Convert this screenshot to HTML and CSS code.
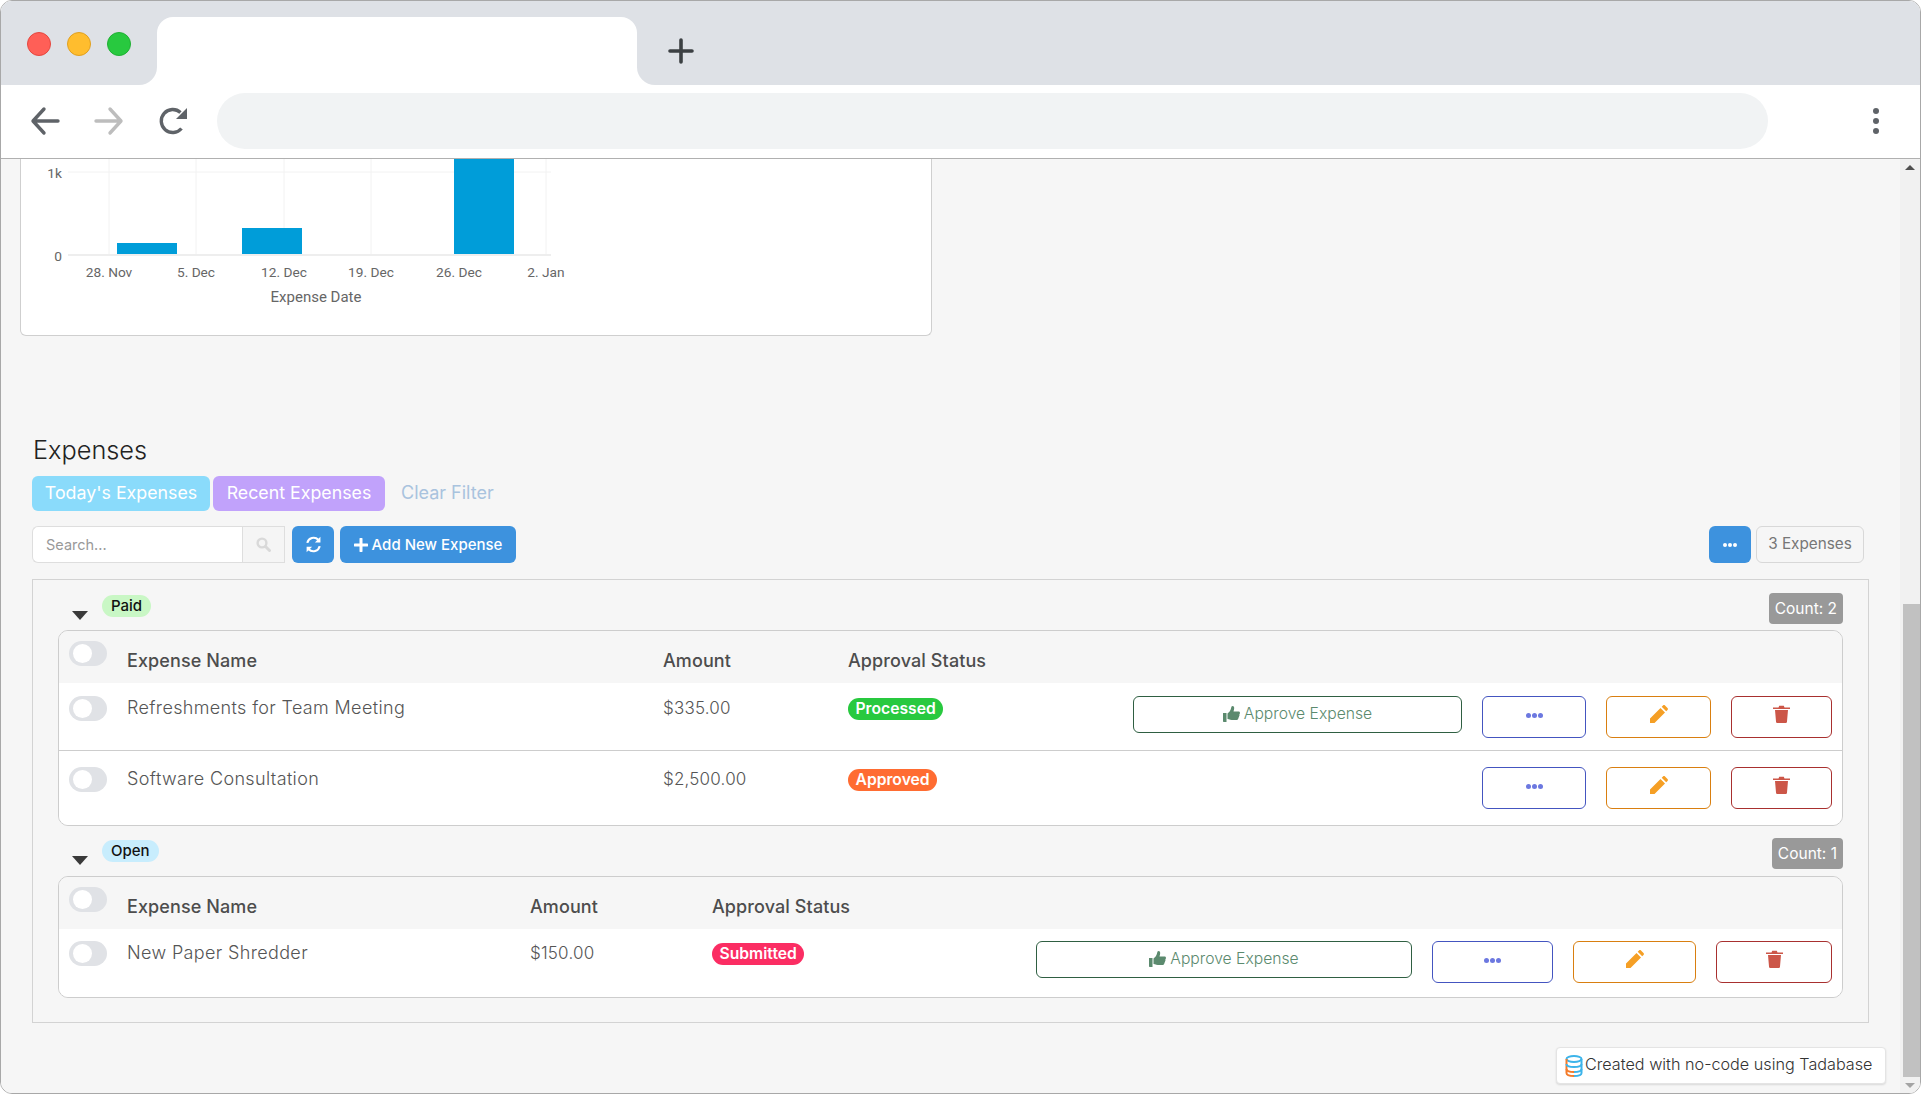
FILE: index.html
```html
<!DOCTYPE html>
<html lang="en">
<head>
    <meta charset="UTF-8">
    <meta name="viewport" content="width=device-width, initial-scale=1.0">
    <title>Expenses</title>
    <link rel="stylesheet" href="styles.css">
</head>
<body>
<div class="window">
    <div class="tabbar">
        <div class="tabbar-left">
            <span class="light light-red"></span>
            <span class="light light-yellow"></span>
            <span class="light light-green"></span>
        </div>
        <div class="tab-wrap"><div class="tab"></div></div>
        <div class="tabbar-right">
            <svg class="new-tab" width="26" height="26" viewBox="0 0 26 26"><path d="M13 2V24M2 13H24" stroke="#3c4043" stroke-width="3.6" stroke-linecap="round"/></svg>
        </div>
    </div>
    <div class="toolbar">
        <svg class="nav-icon" width="30" height="30" viewBox="0 0 30 30"><path d="M28 15H4M14 3L3 15L14 27" fill="none" stroke="#5f6368" stroke-width="3.4" stroke-linecap="round" stroke-linejoin="round"/></svg>
        <svg class="nav-icon" width="30" height="30" viewBox="0 0 30 30"><path d="M2 15H26M16 3L27 15L16 27" fill="none" stroke="#bdbdbd" stroke-width="3.4" stroke-linecap="round" stroke-linejoin="round"/></svg>
        <svg class="nav-icon" width="30" height="30" viewBox="0 0 30 30"><path d="M23.5 22.5A11.5 11.5 0 1 1 22.5 6.5" fill="none" stroke="#5f6368" stroke-width="3.4"/><path d="M29 2V13H18Z" fill="#5f6368"/></svg>
        <div class="urlbar"></div>
        <div class="kebab"><i></i><i></i><i></i></div>
    </div>

    <div class="viewport">
        <div class="page">
            <div class="chart-card">
                <svg class="chart" width="910" height="175" viewBox="0 0 910 175">
                    <g stroke="#f2f2f2" stroke-width="1">
                        <path d="M88 0V96M175 0V96M263 0V96M350 0V96M438 0V96M525 0V96"/>
                        <path d="M47 13H530"/>
                    </g>
                    <path d="M47 96H530" stroke="#eeeeee" stroke-width="2"/>
                    <g fill="#009dd9">
                        <rect x="96" y="84" width="60" height="11"/>
                        <rect x="221" y="69" width="60" height="26"/>
                        <rect x="433" y="0" width="60" height="95"/>
                    </g>
                    <g class="chart-text">
                        <text x="41" y="19" text-anchor="end">1k</text>
                        <text x="41" y="102" text-anchor="end">0</text>
                        <text x="88" y="118" text-anchor="middle">28. Nov</text>
                        <text x="175" y="118" text-anchor="middle">5. Dec</text>
                        <text x="263" y="118" text-anchor="middle">12. Dec</text>
                        <text x="350" y="118" text-anchor="middle">19. Dec</text>
                        <text x="438" y="118" text-anchor="middle">26. Dec</text>
                        <text x="525" y="118" text-anchor="middle">2. Jan</text>
                        <text x="295" y="143" text-anchor="middle" class="chart-title">Expense Date</text>
                    </g>
                </svg>
            </div>

            <h2 class="title">Expenses</h2>

            <div class="filters">
                <button class="filter filter-today">Today's Expenses</button>
                <button class="filter filter-recent">Recent Expenses</button>
                <button class="filter filter-clear">Clear Filter</button>
            </div>

            <div class="controls">
                <div class="search">
                    <div class="search-input">Search...</div>
                    <div class="search-addon">
                        <svg width="15" height="15" viewBox="0 0 15 15"><circle cx="6" cy="6" r="4.4" fill="none" stroke="#d9d9d9" stroke-width="2.4"/><path d="M9.5 9.5L13.5 13.5" stroke="#d9d9d9" stroke-width="3" stroke-linecap="round"/></svg>
                    </div>
                </div>
                <button class="btn-blue btn-refresh">
                    <svg width="17" height="17" viewBox="0 0 16 16"><path d="M2.2 6.5A6 6 0 0 1 12.5 3.6" fill="none" stroke="#fff" stroke-width="2"/><path d="M14.5 0.8V6H9.3Z" fill="#fff"/><path d="M13.8 9.5A6 6 0 0 1 3.5 12.4" fill="none" stroke="#fff" stroke-width="2"/><path d="M1.5 15.2V10H6.7Z" fill="#fff"/></svg>
                </button>
                <button class="btn-blue btn-add">
                    <svg width="14" height="14" viewBox="0 0 14 14"><path d="M7 1V13M1 7H13" stroke="#fff" stroke-width="3" stroke-linecap="round"/></svg>
                    Add New Expense
                </button>
                <div class="controls-right">
                    <button class="btn-blue btn-more">
                        <svg width="14" height="4" viewBox="0 0 14 4"><circle cx="2" cy="2" r="2" fill="#fff"/><circle cx="7" cy="2" r="2" fill="#fff"/><circle cx="12" cy="2" r="2" fill="#fff"/></svg>
                    </button>
                    <div class="total">3 Expenses</div>
                </div>
            </div>

            <div class="panel">
                <div class="group">
                    <div class="group-head">
                        <span class="caret"></span>
                        <span class="pill pill-paid">Paid</span>
                        <span class="count">Count: 2</span>
                    </div>
                    <div class="card card-paid">
                        <div class="row row-head">
                            <span class="toggle"></span>
                            <span>Expense Name</span>
                            <span>Amount</span>
                            <span>Approval Status</span>
                        </div>
                        <div class="row row-first">
                            <span class="toggle"></span>
                            <span class="cell">Refreshments for Team Meeting</span>
                            <span class="cell cell-amount">$335.00</span>
                            <span><span class="status status-processed">Processed</span></span>
                            <button class="act act-approve">
                                <svg width="17" height="16" viewBox="0 0 17 16"><path d="M0 7H3.5V16H1C.4 16 0 15.6 0 15ZM4.5 7.5C6 6.5 7.5 4.5 8 2.5C8.300 .8 8.700 0 9.500 0C11 0 11.500 1.500 11 3.500L10.500 5.500H15.500C16.500 5.500 17 6.200 17 7C17 7.600 16.700 8 16.300 8.300C16.700 8.800 16.700 9.600 16 10.100C16.300 10.800 16 11.500 15.300 11.800C15.600 12.900 15 14 13.500 14H10.500C8 14 6.500 13.500 4.500 13Z" fill="#5b8a6e"/></svg>
                                Approve Expense
                            </button>
                            <button class="act act-more"><svg width="17" height="5" viewBox="0 0 17 5"><circle cx="2.500" cy="2.500" r="2.500" fill="#6c78e0"/><circle cx="8.500" cy="2.500" r="2.500" fill="#6c78e0"/><circle cx="14.500" cy="2.500" r="2.500" fill="#6c78e0"/></svg></button>
                            <button class="act act-edit"><svg width="18" height="18" viewBox="0 0 18 18"><path d="M0 18V13.500L10.500 3L15 7.500L4.500 18ZM11.700 1.800L13 .5C13.600 -.1 14.400 -.1 15 .5L17.500 3C18.100 3.600 18.100 4.400 17.500 5L16.200 6.300Z" fill="#f59f25"/></svg></button>
                            <button class="act act-delete"><svg width="17" height="18" viewBox="0 0 17 18"><path d="M0 2.500H5.500L6.200 .8H10.800L11.500 2.500H17V4H0ZM2 5H15L14 16.500C13.900 17.500 13.300 18 12.500 18H4.500C3.700 18 3.100 17.500 3 16.500Z" fill="#cc5648"/></svg></button>
                        </div>
                        <div class="row row-next">
                            <span class="toggle"></span>
                            <span class="cell">Software Consultation</span>
                            <span class="cell cell-amount">$2,500.00</span>
                            <span><span class="status status-approved">Approved</span></span>
                            <span></span>
                            <button class="act act-more"><svg width="17" height="5" viewBox="0 0 17 5"><circle cx="2.500" cy="2.500" r="2.500" fill="#6c78e0"/><circle cx="8.500" cy="2.500" r="2.500" fill="#6c78e0"/><circle cx="14.500" cy="2.500" r="2.500" fill="#6c78e0"/></svg></button>
                            <button class="act act-edit"><svg width="18" height="18" viewBox="0 0 18 18"><path d="M0 18V13.500L10.500 3L15 7.500L4.500 18ZM11.700 1.800L13 .5C13.600 -.1 14.400 -.1 15 .5L17.500 3C18.100 3.600 18.100 4.400 17.500 5L16.200 6.300Z" fill="#f59f25"/></svg></button>
                            <button class="act act-delete"><svg width="17" height="18" viewBox="0 0 17 18"><path d="M0 2.500H5.500L6.200 .8H10.800L11.500 2.500H17V4H0ZM2 5H15L14 16.500C13.900 17.500 13.300 18 12.500 18H4.500C3.700 18 3.100 17.500 3 16.500Z" fill="#cc5648"/></svg></button>
                        </div>
                    </div>
                </div>

                <div class="group group-next">
                    <div class="group-head">
                        <span class="caret"></span>
                        <span class="pill pill-open">Open</span>
                        <span class="count">Count: 1</span>
                    </div>
                    <div class="card card-open">
                        <div class="row row-head">
                            <span class="toggle"></span>
                            <span>Expense Name</span>
                            <span>Amount</span>
                            <span>Approval Status</span>
                        </div>
                        <div class="row row-first">
                            <span class="toggle"></span>
                            <span class="cell">New Paper Shredder</span>
                            <span class="cell cell-amount">$150.00</span>
                            <span><span class="status status-submitted">Submitted</span></span>
                            <button class="act act-approve">
                                <svg width="17" height="16" viewBox="0 0 17 16"><path d="M0 7H3.5V16H1C.4 16 0 15.6 0 15ZM4.5 7.5C6 6.5 7.5 4.5 8 2.5C8.300 .8 8.700 0 9.500 0C11 0 11.500 1.500 11 3.500L10.500 5.500H15.500C16.500 5.500 17 6.200 17 7C17 7.600 16.700 8 16.300 8.300C16.700 8.800 16.700 9.600 16 10.100C16.300 10.800 16 11.500 15.300 11.800C15.600 12.900 15 14 13.500 14H10.500C8 14 6.500 13.500 4.500 13Z" fill="#5b8a6e"/></svg>
                                Approve Expense
                            </button>
                            <button class="act act-more"><svg width="17" height="5" viewBox="0 0 17 5"><circle cx="2.500" cy="2.500" r="2.500" fill="#6c78e0"/><circle cx="8.500" cy="2.500" r="2.500" fill="#6c78e0"/><circle cx="14.500" cy="2.500" r="2.500" fill="#6c78e0"/></svg></button>
                            <button class="act act-edit"><svg width="18" height="18" viewBox="0 0 18 18"><path d="M0 18V13.500L10.500 3L15 7.500L4.500 18ZM11.700 1.800L13 .5C13.600 -.1 14.400 -.1 15 .5L17.500 3C18.100 3.600 18.100 4.400 17.500 5L16.200 6.300Z" fill="#f59f25"/></svg></button>
                            <button class="act act-delete"><svg width="17" height="18" viewBox="0 0 17 18"><path d="M0 2.500H5.500L6.200 .8H10.800L11.500 2.500H17V4H0ZM2 5H15L14 16.500C13.900 17.500 13.300 18 12.500 18H4.500C3.700 18 3.100 17.500 3 16.500Z" fill="#cc5648"/></svg></button>
                        </div>
                    </div>
                </div>
            </div>

            <div class="footer">
                <div class="credit">
                    <svg width="18" height="22" viewBox="0 0 18 22">
                        <g fill="none" stroke-width="2">
                            <ellipse cx="9" cy="4" rx="7.500" ry="3" stroke="#3db4ea"/>
                            <path d="M1.500 4V18C1.500 19.700 4.500 21 9 21" stroke="#f47b2a"/>
                            <path d="M16.500 4V18C16.500 19.700 13.500 21 9 21" stroke="#3db4ea"/>
                            <path d="M1.500 9C1.500 10.700 4.500 12 9 12S16.500 10.700 16.500 9" stroke="#3db4ea"/>
                            <path d="M1.500 14C1.500 15.700 4.500 17 9 17" stroke="#f47b2a"/>
                            <path d="M9 17C13.500 17 16.500 15.700 16.500 14" stroke="#3db4ea"/>
                        </g>
                    </svg>
                    <span class="credit-text">Created with no-code using Tadabase</span>
                </div>
            </div>
        </div>

        <div class="scrollbar">
            <span class="arrow arrow-up"></span>
            <div class="thumb"></div>
            <span class="arrow arrow-down"></span>
        </div>
    </div>
</div>
</body>
</html>
```

FILE: styles.css
```css
* {
    margin: 0;
    padding: 0;
    box-sizing: border-box;
}
html, body {
    height: 100%;
    overflow: hidden;
    background: #fff;
}
body {
    font-family: Inter, "Liberation Sans", sans-serif;
    color: #555;
}
button {
    font-family: inherit;
    border: none;
    cursor: pointer;
}
.window {
    height: 100%;
    display: flex;
    flex-direction: column;
    border: 1px solid #a8a8a8;
    border-radius: 12px;
    overflow: hidden;
}

/* browser chrome */
.tabbar {
    display: flex;
    height: 84px;
    flex: none;
    background: #fff;
}
.tabbar-left {
    width: 156px;
    background: #dee1e6;
    border-bottom-right-radius: 18px;
    display: flex;
    gap: 16px;
    padding: 31px 0 0 26px;
}
.light {
    width: 24px;
    height: 24px;
    border-radius: 50%;
}
.light-red { background: #ff5f57; border: 1px solid #e5473f; }
.light-yellow { background: #ffbd2e; border: 1px solid #e0a020; }
.light-green { background: #28c93f; border: 1px solid #20b034; }
.tab-wrap {
    width: 480px;
    background: linear-gradient(#dee1e6 40px, #fff 40px);
    padding-top: 16px;
}
.tab {
    height: 100%;
    background: #fff;
    border-radius: 16px 16px 0 0;
}
.tabbar-right {
    flex: 1;
    background: #dee1e6;
    border-bottom-left-radius: 18px;
    padding: 37px 0 0 31px;
}
.new-tab {
    display: block;
}
.toolbar {
    display: flex;
    align-items: center;
    height: 74px;
    flex: none;
    background: #fff;
    border-bottom: 1px solid #b0b0b0;
    padding: 0 0 1px 29px;
}
.nav-icon {
    margin-right: 34px;
    flex: none;
}
.nav-icon:nth-child(3) {
    margin-right: 29px;
}
.urlbar {
    width: 1551px;
    height: 56px;
    border-radius: 28px;
    background: #f1f3f4;
}
.kebab {
    margin-left: 105px;
    display: flex;
    flex-direction: column;
    gap: 4px;
}
.kebab i {
    display: block;
    width: 6px;
    height: 6px;
    border-radius: 50%;
    background: #5f6368;
}

/* page area */
.viewport {
    flex: 1;
    display: flex;
    min-height: 0;
    background: #f6f6f6;
}
.page {
    flex: 1;
    min-width: 0;
    padding: 0 0 0 19px;
}
.scrollbar {
    width: 20px;
    flex: none;
    background: #f1f1f1;
    display: flex;
    flex-direction: column;
    align-items: center;
}
.arrow {
    width: 0;
    height: 0;
    border-left: 5px solid transparent;
    border-right: 5px solid transparent;
}
.arrow-up {
    border-bottom: 5px solid #505050;
    margin-top: 6px;
}
.arrow-down {
    border-top: 5px solid #a3a3a3;
    margin-top: 6px;
}
.thumb {
    width: 17px;
    height: 473px;
    margin: 434px 0 0 3px;
    background: #c1c1c1;
}

/* chart */
.chart-card {
    width: 912px;
    height: 177px;
    background: #fff;
    border: 1px solid #cfcfcf;
    border-top: none;
    border-radius: 0 0 6px 6px;
}
.chart {
    display: block;
}
.chart-text {
    font-family: Roboto, sans-serif;
    font-size: 13.700px;
    fill: #666;
}
.chart-title {
    font-size: 15px;
}

/* header and filters */
.title {
    font-size: 25.300px;
    font-weight: 350;
    line-height: 34px;
    color: #222;
    margin: 97px 0 0 13px;
}
.filters {
    display: flex;
    margin: 9px 0 0 12px;
    gap: 3px;
}
.filter {
    height: 35px;
    border-radius: 6px;
    color: #fff;
    font-size: 17.800px;
    padding: 0 0 2px;
}
.filter-today {
    width: 178px;
    background: #8adbfb;
}
.filter-recent {
    width: 172px;
    background: #c1a2fb;
}
.filter-clear {
    background: none;
    color: #a9c3de;
    font-size: 18px;
    margin-left: 13px;
}
.controls {
    display: flex;
    align-items: stretch;
    height: 37px;
    margin: 15px 0 0 12px;
    padding-right: 36px;
}
.search {
    display: flex;
    width: 253px;
}
.search-input {
    width: 210px;
    background: #fff;
    border: 1px solid #dedede;
    border-right: none;
    border-radius: 6px 0 0 6px;
    font-size: 14.500px;
    color: #999;
    line-height: 35px;
    padding-left: 13px;
}
.search-addon {
    width: 43px;
    background: #f5f5f5;
    border: 1px solid #dedede;
    display: flex;
    align-items: center;
    justify-content: center;
}
.btn-blue {
    background: #3d92de;
    color: #fff;
    border-radius: 6px;
    display: flex;
    align-items: center;
    justify-content: center;
}
.btn-refresh {
    width: 42px;
    margin-left: 7px;
}
.btn-add {
    width: 176px;
    margin-left: 6px;
    font-size: 15px;
    font-weight: 500;
    gap: 4px;
}
.controls-right {
    margin-left: auto;
    display: flex;
    gap: 5px;
}
.btn-more {
    width: 42px;
}
.total {
    width: 108px;
    border: 1px solid #d8d8d8;
    border-radius: 6px;
    font-size: 15.300px;
    color: #777;
    line-height: 34px;
    text-align: center;
}

/* grouped table */
.panel {
    margin: 16px 0 0 12px;
    width: 1837px;
    height: 444px;
    border: 1px solid #d3d3d3;
    padding: 13px 25px 0;
}
.group-next {
    margin-top: 12px;
}
.group-head {
    display: flex;
    align-items: flex-start;
    height: 37px;
}
.group-next .group-head {
    height: 38px;
}
.caret {
    width: 0;
    height: 0;
    border-left: 8px solid transparent;
    border-right: 8px solid transparent;
    border-top: 9px solid #3a3a3a;
    margin: 18px 14px 0 14px;
}
.pill {
    height: 22px;
    line-height: 22px;
    padding: 0 9px;
    border-radius: 11px;
    font-size: 15px;
    font-weight: 500;
    color: #111;
    margin-top: 2px;
}
.pill-paid { background: #c9f7c5; }
.pill-open { background: #c8edfd; }
.count {
    margin-left: auto;
    height: 31px;
    line-height: 31px;
    padding: 0 6px;
    border-radius: 4px;
    background: #999;
    color: #fff;
    font-size: 15.500px;
}
.card {
    border: 1px solid #cdcdcd;
    border-radius: 10px;
    overflow: hidden;
}
.row {
    display: grid;
    align-items: start;
    padding-right: 10px;
}
.card-paid .row {
    grid-template-columns: 68px 536px 185px 285px 329px 124px 125px 121px;
}
.card-open .row {
    grid-template-columns: 68px 403px 182px 324px 376px 141px 143px 136px;
}
.row-head {
    height: 52px;
    background: #f6f6f6;
    font-size: 18px;
    font-weight: 500;
    letter-spacing: .1px;
    color: #4d4d4d;
}
.row-head .toggle {
    margin-top: 10px;
}
.row-head span:not(.toggle) {
    line-height: 20px;
    margin-top: 20px;
}
.row-first {
    background: #fff;
    padding-top: 13px;
    padding-bottom: 12px;
}
.card-open .row-first {
    padding-top: 12px;
    padding-bottom: 14px;
}
.row-next {
    background: #fff;
    border-top: 1px solid #cdcdcd;
    padding-top: 16px;
    padding-bottom: 16px;
}
.toggle {
    display: block;
    width: 38px;
    height: 25px;
    margin-left: 10px;
    border-radius: 13px;
    background: #e0e2e6;
    position: relative;
}
.toggle::before {
    content: "";
    position: absolute;
    left: 4px;
    top: 3px;
    width: 19px;
    height: 19px;
    border-radius: 50%;
    background: #fff;
}
.cell {
    font-size: 18px;
    line-height: 24px;
    font-weight: 300;
    letter-spacing: .35px;
    color: #555;
}
.cell-amount {
    font-size: 17px;
    letter-spacing: .2px;
}
.status {
    display: inline-block;
    height: 22px;
    line-height: 22px;
    margin-top: 2px;
    padding: 0 7.500px;
    border-radius: 11px;
    color: #fff;
    font-size: 15.700px;
    font-weight: 600;
}
.status-processed { background: #28c93f; }
.status-approved { background: #ff6c32; }
.status-submitted { background: #fb2d63; }
.act {
    height: 42px;
    margin-left: 20px;
    background: #fff;
    border: 1px solid;
    border-radius: 6px;
    display: flex;
    align-items: center;
    justify-content: center;
}
.act-approve {
    height: 37px;
    margin-left: 0;
    border-color: #2f5f42;
    color: #5b8a6e;
    font-size: 15.700px;
    font-weight: 300;
    gap: 4px;
    padding-bottom: 2px;
}
.act-more { border-color: #4455c0; padding-bottom: 4px; }
.act-edit { border-color: #d97f10; padding-bottom: 6px; }
.act-delete { border-color: #a8302f; padding-bottom: 6px; }

/* footer credit */
.footer {
    display: flex;
    justify-content: flex-end;
    padding: 24px 14px 0 0;
}
.credit {
    width: 330px;
    height: 37px;
    background: #fff;
    border: 1px solid #e4e4e4;
    border-radius: 4px;
    box-shadow: 0 1px 2px rgba(0, 0, 0, .12);
    display: flex;
    align-items: center;
    gap: 2px;
    padding-left: 8px;
    font-size: 16.200px;
    color: #333;
}
.credit-text {
    font-weight: 300;
    white-space: nowrap;
    padding-bottom: 3px;
}
```
